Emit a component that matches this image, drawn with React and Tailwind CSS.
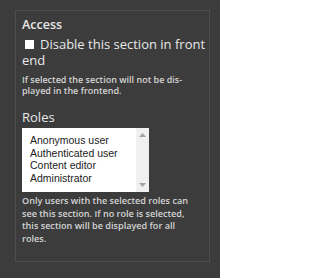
import React from "react";

export default function App() {
  const roles = ["Anonymous user", "Authenticated user", "Content editor", "Administrator"];
  return (
    <div className="w-[220px] h-[278px] bg-[#3c3c3c] pt-[10px] pl-[15px]" style={{ fontFamily: '"Open Sans", sans-serif' }}>
      <div className="w-[195px] h-[252px] border border-[#4e4e4e] pl-[6px] pr-[1px] pt-[6px]">
        <div className="text-[12.5px] leading-[16px] font-semibold text-[#e8e8e8]">Access</div>
        <div className="mt-[3px] text-[13px] leading-[16px] text-[#e8e8e8]">
          <span className="inline-block w-[9px] h-[9px] bg-white ml-[3px] mr-[6px]"></span>
          Disable this section in front end
        </div>
        <div className="mt-[6px] text-[9px] leading-[11px] font-semibold text-[#d4d4d4]">
          If selected the section will not be dis-<br />played in the frontend.
        </div>
        <div className="mt-[13px] text-[13px] leading-[16px] text-[#e8e8e8]">Roles</div>
        <div className="mt-[3px] w-[127px] h-[64px] bg-white flex">
          <div className="flex-1 pl-[8px] pt-[6px] text-[10.5px] leading-[12.67px] text-[#222]" style={{ fontFamily: '"Liberation Sans", Arial, sans-serif' }}>
            {roles.map((r) => (
              <div key={r}>{r}</div>
            ))}
          </div>
          <div className="w-[13px] bg-[#f0f0f0] flex flex-col justify-between items-center py-[5px]">
            <svg width="7" height="4" viewBox="0 0 7 4"><path d="M0 4 L3.5 0 L7 4 Z" fill="#a3a3a3" /></svg>
            <svg width="7" height="4" viewBox="0 0 7 4"><path d="M0 0 L3.5 4 L7 0 Z" fill="#a3a3a3" /></svg>
          </div>
        </div>
        <div className="mt-[3px] w-[172px] text-[9.1px] leading-[12.67px] font-semibold text-[#d4d4d4]">
          Only users with the selected roles can see this section. If no role is selected, this section will be displayed for all roles.
        </div>
      </div>
    </div>
  );
}
